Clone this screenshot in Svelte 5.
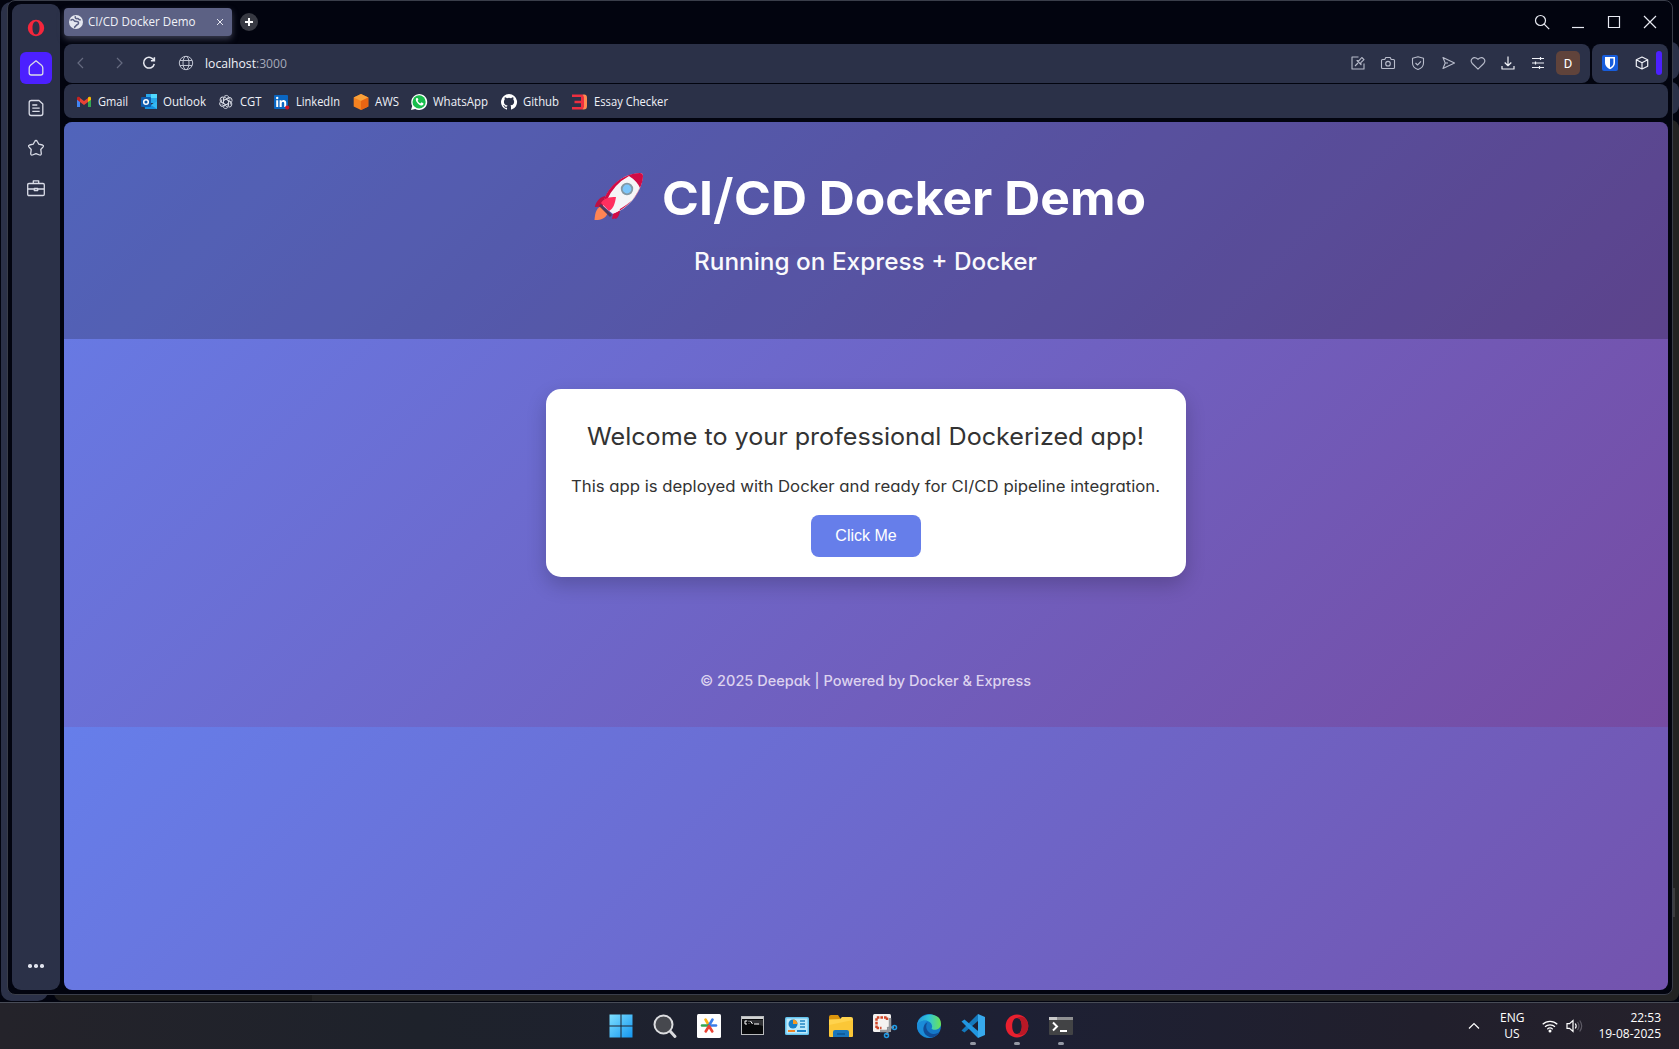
<script>
  const bookmarks = [
    { id: 'gmail', label: 'Gmail', width: 30 },
    { id: 'outlook', label: 'Outlook', width: 43 },
    { id: 'cgt', label: 'CGT', width: 21.5 },
    { id: 'linkedin', label: 'LinkedIn', width: 44 },
    { id: 'aws', label: 'AWS', width: 24 },
    { id: 'whatsapp', label: 'WhatsApp', width: 55 },
    { id: 'github', label: 'Github', width: 36 },
    { id: 'essay', label: 'Essay Checker', width: 74 },
  ];
  const tools = ['edit', 'camera', 'shield', 'send', 'heart', 'download', 'tune'];
  const apps = ['windows', 'search', 'spark', 'cmd', 'panel', 'folder', 'snip', 'edge', 'code', 'opera', 'terminal'];
  const running = ['code', 'opera', 'terminal'];
</script>

{#snippet label(text, width, size)}
  <svg class="label" {width} height="18" viewBox="0 0 {width} 18">
    <text x="0" y="13.4" font-size={size} textLength={width} lengthAdjust="spacingAndGlyphs">{text}</text>
  </svg>
{/snippet}

{#snippet bookmarkIcon(id)}
  <svg class="bm-icon" width="16" height="16" viewBox="0 0 16 16">
    {#if id === 'gmail'}
      <path d="M1 4v9h3V7z" fill="#4285f4" /><path d="M12 7v6h3V4z" fill="#34a853" />
      <path d="M4 4l4 3 4-3v4l-4 3-4-3z" fill="#ea4335" />
      <path d="M1 4.200C1 2.500 3 2.300 4 3.400V8L1 5.800z" fill="#c5221f" />
      <path d="M15 4.200c0-1.700-2-1.900-3-.8V8l3-2.200z" fill="#fbbc04" />
    {:else if id === 'outlook'}
      <path d="M5 0h11v9H5z" fill="#28a8ea" /><path d="M10 0h6v4h-6z" fill="#50d9ff" />
      <path d="M5 4h5v4H5z" fill="#0a63b5" /><path d="M3 7l7 4 6-4v8H4z" fill="#1490df" />
      <path d="M16 7v8l-6-4z" fill="#35b8f1" />
      <rect y="3" width="10" height="10" rx="1" fill="#0f5cad" />
      <circle cx="5" cy="8" r="2.300" fill="none" stroke="#fff" stroke-width="1.500" />
    {:else if id === 'cgt'}
      <g fill="none" stroke="#d5d8e2" stroke-width="1" transform="translate(.6 .6) scale(.92)">
        {#each [0, 60, 120, 180, 240, 300] as a}
          <path transform="rotate({a} 8 8)" d="M5.300 9.600V4.200C5.300.500 10-.200 11.200 2.800M5.300 6.400L10 3.700l2.700 1.600" />
        {/each}
      </g>
    {:else if id === 'linkedin'}
      <rect x="0" y="1" width="14" height="14" rx="1" fill="#0a66c2" />
      <path d="M2.200 6.200h2V13h-2zM5.600 6.200h2v1c1-1.700 4.600-1.600 4.600 1.600V13h-2V9.400c0-2-2.500-1.900-2.500 0V13h-2.100z" fill="#fff" />
      <circle cx="3.200" cy="4" r="1.200" fill="#fff" /><circle cx="13.200" cy="13.500" r="2.100" fill="#d11124" />
    {:else if id === 'aws'}
      <path d="M8 0l7.300 3.500v9L8 16 .7 12.500v-9z" fill="#f58220" />
      <path d="M8 0l7.300 3.500L8 7 .7 3.500z" fill="#f9a13a" /><path d="M8 7l7.300-3.500v9L8 16z" fill="#e96513" />
    {:else if id === 'whatsapp'}
      <path d="M0 16l1.200-4.100A8 8 0 1 1 4.200 15z" fill="#fff" />
      <circle cx="8.100" cy="7.900" r="6.600" fill="#19bd4c" />
      <path d="M5.500 4c-2.500 2 2.600 8.600 6 7.200 1-.5 1.300-1.600.8-2L10.500 8.300l-1.200 1.100C8 8.900 7 7.800 6.600 6.700l.8-1L6.600 4z" fill="#fff" />
    {:else if id === 'github'}
      <path fill="#fff" d="M8 0a8 8 0 0 0-2.530 15.590c.4.070.55-.17.55-.38v-1.490c-2.220.49-2.690-.94-2.690-.94-.36-.92-.89-1.170-.89-1.170-.73-.5.050-.49.050-.49.800.060 1.230.830 1.230.830.720 1.220 1.880.870 2.340.660.070-.520.280-.870.500-1.070-1.770-.200-3.640-.890-3.640-3.950 0-.870.310-1.590.820-2.150-.080-.200-.360-1.020.080-2.120 0 0 .670-.210 2.200.820a7.600 7.600 0 0 1 4 0c1.530-1.040 2.200-.820 2.200-.820.440 1.100.160 1.920.080 2.120.510.560.820 1.270.820 2.150 0 3.070-1.870 3.750-3.650 3.950.290.250.540.730.540 1.480v2.200c0 .210.150.460.550.380A8 8 0 0 0 8 0z" />
    {:else}
      <path d="M0 .5h10.500L13 3v10l-2.500 2.500H0v-2.600h9V9.300H2.500V6.700H9V3.100H0z" fill="#ee2f40" />
      <path d="M10.500.5h1C14.500.5 15 2 15 4v8c0 2.500-1 3.500-3.500 3.500h-1L12 13V3z" fill="#ff8a50" />
    {/if}
  </svg>
{/snippet}

{#snippet toolIcon(id)}
  <svg class="tool {id}" width="16" height="16" viewBox="0 0 16 16">
    {#if id === 'edit'}
      <path d="M8.500 2H2v12h12V8.500M5 11l3-3M7 5.500l1.800.3 3-3.300 2.200 2.200-3.200 3 .2 2z" />
    {:else if id === 'camera'}
      <path d="M2.500 4.500h2.300l1-2h4.400l1 2h2.300q1 0 1 1v7q0 1-1 1h-11q-1 0-1-1v-7q0-1 1-1z" /><circle cx="8" cy="8.700" r="2.300" />
    {:else if id === 'shield'}
      <path d="M8 1.800l5.500 1.500V8c0 3.500-2.500 5.500-5.500 6.500C5 13.500 2.500 11.500 2.500 8V3.300zM5.500 8l2 2 3.500-3.700" />
    {:else if id === 'send'}
      <path d="M3 2.500L14.500 8 3 13.500 5.200 8zM5.200 8H8" />
    {:else if id === 'heart'}
      <path d="M8 14.200L2.300 8.500C-.5 5.500 3 .2 8 4.200c5-4 8.500 1.300 5.700 4.300z" />
    {:else if id === 'download'}
      <path d="M8 1.500v9M4.700 7.500L8 10.700l3.300-3.200M2 11v3h12v-3" />
    {:else}
      <path d="M2 3.500h12M2 8h12M2 12.500h12M10.500 2v3M5.500 6.500v3M9.500 11v3" />
    {/if}
  </svg>
{/snippet}

{#snippet appIcon(id)}
  <svg width="24" height="24" viewBox="0 0 24 24">
    {#if id === 'windows'}
      <defs><linearGradient id="win" x1="0" y1="0" x2="1" y2="1"><stop stop-color="#7fe0ff" /><stop offset="1" stop-color="#1496f0" /></linearGradient></defs>
      <path d="M.5.500h11v11H.500zM12.500.500h11v11h-11zM.500 12.500h11v11H.500zM12.500 12.500h11v11h-11z" fill="url(#win)" />
    {:else if id === 'search'}
      <path d="M17 17l5 5.500" stroke="#d9dade" stroke-width="3" stroke-linecap="round" />
      <circle cx="10.500" cy="10.500" r="9" fill="#46484e" stroke="#dcdde0" stroke-width="2" />
    {:else if id === 'spark'}
      <rect width="24" height="24" rx="1.500" fill="#fff" />
      <g stroke-width="2.600" stroke-linecap="round"><path d="M12 11.500L8.500 5.500" stroke="#fbb315" /><path d="M12 11.500l3.500-6" stroke="#3b7de9" /><path d="M11 11.500H5" stroke="#34a853" /><path d="M13 11.500h6" stroke="#3b7de9" /><path d="M12 12l-3.300 5.500M12 12l3.300 5.500" stroke="#ea4335" /></g>
    {:else if id === 'cmd'}
      <rect x=".5" y="2.500" width="22" height="18" fill="#08090b" stroke="#b9bbbd" />
      <path d="M1 3h21v2H1z" fill="#d0d2d3" /><path d="M1 6h21v6z" fill="#4a4b4e" opacity=".6" />
      <path d="M6 7H4v3h2M8 7.500v.5M8 9.500v.5M9.500 7l2 3M13 10h5" stroke="#fff" fill="none" />
    {:else if id === 'panel'}
      <rect y="3" width="24" height="18" rx="1.500" fill="#63c3ee" /><rect x="1.500" y="4.500" width="21" height="15" fill="#bceafc" />
      <circle cx="8" cy="10" r="4.500" fill="#1780c8" /><path d="M8 10V5.500A4.500 4.500 0 0 1 12.500 10z" fill="#f59a22" />
      <path d="M15 7h5M15 10h5M15 13h5" stroke="#2588c4" stroke-width="1.500" /><path d="M3 17h7" stroke="#ed8527" stroke-width="2" /><path d="M12 17h9" stroke="#1780c8" stroke-width="2" />
    {:else if id === 'folder'}
      <path d="M0 3q0-2 2-2h7l2 3v5H0z" fill="#dc950c" /><path d="M0 5.500l11-.5 2-2h9q2 0 2 2v17H0z" fill="#ffd34d" />
      <path d="M0 22V11l24-5v16q0 1-1 1H1q-1 0-1-1z" fill="#fbc737" /><path d="M4 23v-5q0-2 2-2h12q2 0 2 2v5z" fill="#1976bc" /><path d="M8 20h8" stroke="#0d5795" stroke-width="1.500" />
    {:else if id === 'snip'}
      <rect width="18" height="18" rx="1.500" fill="#f4f2f1" /><path d="M3.500 14V3.500H14M3.500 14h5M14 3.500v3" fill="none" stroke="#cf4427" stroke-width="2.500" stroke-dasharray="2.600 1" />
      <path d="M17 4v11q0 2-2 2H7" fill="none" stroke="#96989c" stroke-width="2.500" /><path d="M14 14l7-1M15 15l-1 6" stroke="#8d9298" stroke-width="2" />
      <circle cx="21.500" cy="13.500" r="2" fill="none" stroke="#209be5" stroke-width="1.500" /><circle cx="13.500" cy="21.500" r="2" fill="none" stroke="#209be5" stroke-width="1.500" />
    {:else if id === 'edge'}
      <defs><linearGradient id="edg"><stop stop-color="#2396de" /><stop offset=".5" stop-color="#31c6d5" /><stop offset="1" stop-color="#6de353" /></linearGradient></defs>
      <circle cx="12" cy="12" r="12" fill="#1478c8" /><path d="M0 12C0-2 24-4 24 10c0 6-8 7-9.500 4.500C16 13 15 8 10.500 7 5 6 1 9 0 12z" fill="url(#edg)" />
      <path d="M10.500 7C4 10 6.500 23 16 23 9 26 0 20 0 12c1-4 6-6.500 10.500-5z" fill="#1b8cd8" />
      <path d="M10.500 8.500c-3 4-.5 10.500 5.500 11.500 3 .3 5-1 6.500-2-2 4-6.500 6-10 5C4 20 5.500 10 10.500 8.500z" fill="#114c96" />
    {:else if id === 'code'}
      <path d="M17 0v7L3.500 18.500.500 16.500z" fill="#1479bd" /><path d="M17 24v-7L3.500 5.500.500 7.500z" fill="#2196e0" />
      <path d="M17 0l7 3v18l-7 3z" fill="#37a9ed" />
    {:else if id === 'opera'}
      <path fill-rule="evenodd" d="M12 .5C5.600.5.700 5.600.700 12S5.600 23.500 12 23.500 23.300 18.400 23.300 12 18.400.5 12 .5zM12 4c3 0 4.800 3.500 4.800 8S15 20 12 20s-4.800-3.500-4.800-8S9 4 12 4z" fill="#e8202f" />
      <path d="M12 4c3 0 4.800 3.500 4.800 8S15 20 12 20c2.500 1.600 5.300 1.400 7.600 0 4.900-4.300 4.900-11.700 0-16-2.300-1.400-5.100-1.600-7.600 0z" fill="#b81826" />
    {:else}
      <rect y="3" width="24" height="18" rx="1" fill="#424345" /><path d="M0 3h8v3H0z" fill="#c9c9ca" /><path d="M8 3h16v3H8z" fill="#8f9092" />
      <path d="M4 8.500l4 4-4 4" fill="none" stroke="#fff" stroke-width="2" /><path d="M11 17h7" stroke="#fff" stroke-width="2" />
    {/if}
  </svg>
{/snippet}

<div class="screen">
  <div class="back-window">
    <div class="back-side"></div>
    <div class="back-bar"></div>
    <div class="back-bar second"></div>
    <div class="back-editor"></div>
    <div class="back-scroll"></div>
  </div>
  <div class="window">
    <aside class="sidebar">
      <svg class="brand" width="18" height="18" viewBox="0 0 18 18"><path fill-rule="evenodd" d="M9 .8A8.200 8.200 0 1 0 9 17.200 8.200 8.200 0 1 0 9 .8zM9 2.600c2.200 0 3.500 2.600 3.500 6.400S11.200 15.400 9 15.400 5.500 12.800 5.500 9 6.800 2.600 9 2.600z" fill="#f5263c" /></svg>
      <button class="side-item active" aria-label="Home"><svg width="18" height="18" viewBox="0 0 18 18"><path d="M9 1.800l5.500 4.400q1.300 1 1.300 2.800v5q0 2-2 2H4.200q-2 0-2-2V9q0-1.800 1.300-2.800z" /></svg></button>
      <button class="side-item" aria-label="Notes"><svg width="18" height="18" viewBox="0 0 18 18"><path d="M4 1.500h8L15.800 5v9.500q0 2-2 2H4.200q-2 0-2-2v-11q0-2 2-2zM5.300 6h5M5.300 9.200h7.400M5.300 12.400h7.400" /></svg></button>
      <button class="side-item" aria-label="Favourites"><svg width="18" height="18" viewBox="0 0 18 18"><path d="M9 1.500q.8 0 1.300 1L11.800 5.200l3.700.8q1.500.5.600 1.800L13.800 10.500l.5 4q0 2-1.700 1.500L9 14.700 5.400 16q-1.700.5-1.700-1.500l.5-4L1.900 7.800Q1 6.500 2.500 6l3.700-.8L7.700 2.500Q8.200 1.500 9 1.500z" /></svg></button>
      <button class="side-item" aria-label="Workspace"><svg width="18" height="18" viewBox="0 0 18 18"><path d="M2 4.500h14q1.300 0 1.300 1.300v9.400q0 1.300-1.300 1.300H2q-1.300 0-1.300-1.300V5.800Q.7 4.500 2 4.500zM6.300 4.500V1.800h5.400v2.700M.7 10h6.500M10.800 10h6.500M7.300 9.500h3.400v2H7.300z" /></svg></button>
      <div class="dots"><i></i><i></i><i></i></div>
    </aside>

    <div class="main">
      <div class="tabs">
        <div class="tab">
          <svg width="14" height="14" viewBox="0 0 14 14"><circle cx="7" cy="7" r="7" fill="#e4e6ef" /><path d="M1.500 5.500C3 4 4.500 4 5 5.500c.3 1 1.500 1 3 1 2 0 2 2.500.5 3S6.500 12 5 12.500M6.500 1.200C5.500 3 7 3.800 8.500 3.600s1 1.700 3.300 1.200" fill="none" stroke="#5c6184" stroke-width="1.500" /></svg>
          {@render label('CI/CD Docker Demo', 107.5, 12.2)}
          <svg class="close" width="8" height="8" viewBox="0 0 8 8"><path d="M1 1l6 6M7 1L1 7" /></svg>
        </div>
        <div class="plus"><svg width="8" height="8" viewBox="0 0 8 8"><path d="M4 0v8M0 4h8" stroke="#fff" stroke-width="2" /></svg></div>
        <div class="controls">
          <svg width="16" height="16" viewBox="0 0 16 16"><circle cx="6.500" cy="6.500" r="5" /><path d="M10.200 10.200l5 5" /></svg>
          <svg width="16" height="16" viewBox="0 0 16 16"><path d="M2 13.500h12" /></svg>
          <svg width="16" height="16" viewBox="0 0 16 16"><path d="M2.500 2.500h11v11h-11z" /></svg>
          <svg width="16" height="16" viewBox="0 0 16 16"><path d="M2 2l12 12M14 2L2 14" /></svg>
        </div>
      </div>

      <div class="bars">
        <div class="address">
          <svg class="nav dim" width="16" height="16" viewBox="0 0 16 16"><path d="M10 3L5 8l5 5" /></svg>
          <svg class="nav dim" width="16" height="16" viewBox="0 0 16 16"><path d="M6 3l5 5-5 5" /></svg>
          <svg class="nav reload" width="16" height="16" viewBox="0 0 16 16"><path d="M13 5.500A5.400 5.400 0 1 0 13.300 9M13.400 2.300v3.500h-3.500" /></svg>
          <svg class="nav globe" width="16" height="16" viewBox="0 0 16 16"><circle cx="8" cy="8" r="6.700" /><ellipse cx="8" cy="8" rx="3" ry="6.700" /><path d="M2 5.500h12M2 10.500h12" /></svg>
          <svg class="label url" width="82" height="18" viewBox="0 0 82 18"><text x="0" y="13.500" font-size="12.700" textLength="82" lengthAdjust="spacingAndGlyphs">localhost<tspan>:3000</tspan></text></svg>
          <div class="tools">
            {#each tools as t}{@render toolIcon(t)}{/each}
            <span class="avatar">D</span>
          </div>
        </div>
        <div class="extensions">
          <svg width="16" height="16" viewBox="0 0 16 16"><rect width="16" height="16" rx="2" fill="#175ddc" /><path d="M3 2h10v6c0 3-2.500 5-5 6.200C5.500 13 3 11 3 8z" fill="#fff" /><path d="M8 3.600h3.400V8c0 2-1.600 3.500-3.400 4.500z" fill="#175ddc" /></svg>
          <svg class="tool cube" width="16" height="16" viewBox="0 0 16 16"><path d="M8 2l5.700 2.700v6.600L8 14l-5.700-2.700V4.700zM2.300 4.700L8 7.700l5.700-3M8 7.700V14" /></svg>
          <i></i>
        </div>
      </div>

      <div class="bookmarks">
        {#each bookmarks as b}
          <div class="bookmark">{@render bookmarkIcon(b.id)}{@render label(b.label, b.width, 12.2)}</div>
        {/each}
      </div>

      <div class="page">
        <header>
          <div class="title-row">
            <svg class="rocket" width="50" height="50" viewBox="0 0 50 50">
              <path d="M8 34c-5 1-7 6-7.500 14 4 .5 12-1 13-7z" fill="#ff8454" />
              <path d="M14 24C7 23 2 29 .8 35l11-.5zM26 35c1 7-3 12-4.500 12L17 36z" fill="#be1044" />
              <path d="M9 34C10 20 25 2 46 1c2 0 3 1 3 3C47 23 33 37 19 42z" fill="#f5f5f7" />
              <path d="M9 32C11 19 25 2 46 1c2 0 3 1 3 3q0 5-3 12Q43 9 35 4 20 12 13 28zM46 15C41 28 29 38 19 42l-1 5 5-1 3-9C36 31 43 25 46 15z" fill="#d10b45" />
              <path d="M7 32l11 11-2 2L5 34z" fill="#4e395d" />
              <path d="M7 31c3-5 8-6 15-6-1 7-3 12-7 14z" fill="#ff2f5f" />
              <circle cx="33" cy="17" r="5.300" fill="#7cc6fa" stroke="#8399a5" stroke-width="1.800" />
            </svg>
            <svg class="fit" width="484" height="60" viewBox="0 0 484 60"><text x="0" y="43.500" font-size="47" textLength="484" lengthAdjust="spacingAndGlyphs">CI<tspan class="slash" dy="3">/</tspan><tspan dy="-3">CD Docker Demo</tspan></text></svg>
          </div>
          <svg class="fit sub" width="343" height="36" viewBox="0 0 343 36"><text x="0" y="26" font-size="24" font-weight="500" textLength="343" lengthAdjust="spacingAndGlyphs">Running on Express + Docker</text></svg>
        </header>
        <main>
          <section class="card">
            <svg class="fit" width="557" height="36" viewBox="0 0 557 36"><text x="-1" y="25.400" font-size="24" textLength="557" lengthAdjust="spacingAndGlyphs">Welcome to your professional Dockerized app!</text></svg>
            <svg class="fit para" width="590" height="26" viewBox="0 0 590 26"><text x="0" y="18.400" font-size="15.800" textLength="589" lengthAdjust="spacingAndGlyphs">This app is deployed with Docker and ready for CI/CD pipeline integration.</text></svg>
            <button class="cta">Click Me</button>
          </section>
        </main>
        <footer>
          <svg class="fit" width="331" height="24" viewBox="0 0 331 24"><text x="-1" y="17.400" font-size="14.200" font-weight="500" textLength="331" lengthAdjust="spacingAndGlyphs">© 2025 Deepak | Powered by Docker &amp; Express</text></svg>
        </footer>
      </div>
    </div>
  </div>

  <div class="taskbar">
    <div class="apps">
      {#each apps as a}
        <div class="app" class:running={running.includes(a)}>{@render appIcon(a)}</div>
      {/each}
    </div>
    <div class="tray">
      <svg class="chev" width="12" height="8" viewBox="0 0 12 8"><path d="M1 6.500l5-5 5 5" /></svg>
      <div class="lang">ENG<br />US</div>
      <svg class="wifi" width="16" height="14" viewBox="0 0 16 14"><path d="M.7 5.300a10.500 10.500 0 0 1 14.600 0M3 7.800a7.200 7.200 0 0 1 10 0M5.300 10.200a4 4 0 0 1 5.400 0" /><circle cx="8" cy="12" r="1.500" /></svg>
      <svg class="vol" width="17" height="14" viewBox="0 0 17 14"><path d="M1 4.700h2.500L7 1.500v11L3.500 9.300H1zM9.300 4.500q1.700 2.500 0 5" /><path class="faint" d="M11.500 3q3 4 0 8M13.700 1.500q4 5.500 0 11" /></svg>
      <div class="clock">22:53<br />19-08-2025</div>
    </div>
  </div>
</div>

<style>
  :global(body) { background: #02040f; overflow: hidden; }
  * { box-sizing: border-box; }
  svg { display: block; flex: none; overflow: visible; }
  button { border: 0; padding: 0; background: none; font: inherit; color: inherit; }

  .screen { position: relative; display: flex; flex-direction: column; width: 1679px; height: 1049px; background: #02040f; font-family: 'Open Sans', 'Noto Sans', sans-serif; color: #fff; overflow: hidden; }

  .back-window > div { position: absolute; }
  .back-side { left: 1px; top: 2px; width: 47px; height: 999px; background: #2b3148; border-radius: 10px; }
  .back-bar { right: 0; top: 42px; width: 12px; height: 37px; background: #2b3148; border-radius: 0 8px 8px 0; }
  .back-bar.second { top: 82px; height: 32px; }
  .back-editor { left: 54px; right: 0; top: 120px; height: 881px; background: linear-gradient(90deg, #1b1b1b 258px, #232323 258px); border-radius: 8px; }
  .back-scroll { left: 1672px; top: 888px; width: 3px; height: 29px; background: #3c3c3e; }

  .window { position: relative; display: flex; gap: 4px; flex: none; margin-left: 7px; width: 1666px; height: 995px; padding: 3px 4px 4px; background: #02040f; border: 1px solid #3a3e4a; border-radius: 8px; }

  .sidebar { display: flex; flex-direction: column; align-items: center; width: 48px; padding-top: 15px; background: #2b3148; border-radius: 9px; }
  .brand { margin-bottom: 15px; }
  .side-item { display: grid; place-items: center; width: 32px; height: 32px; margin-bottom: 8px; border-radius: 6px; }
  .side-item.active { background: #4c20ff; }
  .side-item svg { fill: none; stroke: #d9dce7; stroke-width: 1.3; stroke-linejoin: round; }
  .dots { display: flex; gap: 2.5px; margin-top: auto; margin-bottom: 22.5px; }
  .dots i { width: 3.500px; height: 3.500px; border-radius: 50%; background: #e1e4ee; }

  .main { flex: 1; display: flex; flex-direction: column; min-width: 0; }
  .tabs { display: flex; height: 40px; padding-top: 4px; }
  .tab { display: flex; align-items: center; width: 168px; height: 28px; padding: 0 8px 0 5px; gap: 5px; background: #5c6184; border-radius: 4px; box-shadow: 0 3px 6px #3a3d50; }
  .close { margin-left: auto; fill: none; stroke: #e5e7f0; }
  .label text { fill: #f0f2f8; }
  .plus { display: grid; place-items: center; width: 18px; height: 18px; margin: 5px 0 0 8px; border-radius: 50%; background: #373942; }
  .controls { display: flex; gap: 20px; margin: 6px 10px 0 auto; fill: none; stroke: #e8eaf2; stroke-width: 1.200; }

  .bars { display: flex; gap: 2px; height: 39px; }
  .address { flex: 1; display: flex; align-items: center; background: #2b3148; border-radius: 8px; padding: 0 0 1px 9px; }
  .nav { fill: none; stroke: #e7e9f1; stroke-width: 1.200; }
  .nav.dim { stroke: #666b80; margin-right: 21.500px; }
  .reload { stroke-width: 1.500; margin-left: -7px; margin-right: 21px; }
  .globe { stroke: #bfc3d1; stroke-width: 1; margin-right: 11px; }
  .url tspan { fill: #a5a9b8; }
  .tools { display: flex; align-items: center; gap: 14px; margin-left: auto; padding-right: 10px; }
  .tool { fill: none; stroke: #b9bdcc; stroke-width: 1.100; stroke-linejoin: round; }
  .download, .tune, .cube { stroke: #f0f2f8; stroke-width: 1.200; }
  .avatar { display: grid; place-items: center; width: 24px; height: 24px; margin-left: -4px; border-radius: 5px; background: #60433b; font: 400 13px Roboto, sans-serif; }
  .extensions { display: flex; align-items: center; width: 76px; padding: 0 0 1px 10px; background: #2b3148; border-radius: 8px; }
  .extensions .cube { margin-left: 16px; }
  .extensions i { width: 6px; height: 24px; margin-left: 6px; background: #4c20ff; border-radius: 3px; }

  .bookmarks { display: flex; align-items: center; gap: 12.600px; height: 34px; margin-top: 1px; padding: 1.500px 0 0 12px; background: #2b3148; border-radius: 8px; }
  .bookmark { display: flex; align-items: center; gap: 6px; }

  .page { flex: 1; margin-top: 4px; border-radius: 8px; overflow: hidden; background: linear-gradient(135deg, #667eea, #764ba2) 0 0 / 100% 605px; font-family: Inter, sans-serif; }
  .fit text { font-feature-settings: 'cv11'; fill: currentColor; }
  header { display: flex; flex-direction: column; align-items: center; height: 217px; padding-top: 49px; background: rgba(0, 0, 0, 0.2); }
  .title-row { display: flex; gap: 18px; margin-left: 8px; font-weight: 660; }
  .slash { font-size: 54px; font-weight: 500; }
  .rocket { margin-top: 1px; }
  .sub { margin: 13px 1px 0 0; opacity: .97; }
  main { display: flex; justify-content: center; padding-top: 50px; }
  .card { display: flex; flex-direction: column; align-items: center; width: 640px; height: 188px; padding-top: 31px; border-radius: 15px; background: #fff; color: #333; box-shadow: 0 8px 20px rgba(0, 0, 0, 0.2); }
  .para { margin-top: 18px; }
  .cta { margin-top: 15px; width: 110px; height: 42px; border-radius: 8px; background: #667eea; color: #fff; font: 16px 'Liberation Sans', sans-serif; }
  footer { display: flex; justify-content: center; margin-top: 92px; color: #ddd3ef; }

  .taskbar { position: relative; display: flex; align-items: center; justify-content: center; flex: none; margin-top: 7px; height: 47px; border-top: 1px solid #484c57; background: linear-gradient(90deg, #24232a, #1e222b 25%, #1d2034 60%, #211f2c 85%, #25212b); }
  .apps { display: flex; gap: 20px; margin-left: 2.500px; }
  .app { position: relative; width: 24px; height: 24px; }
  .running::after { content: ''; position: absolute; left: 9px; top: 28px; width: 6px; height: 3px; border-radius: 2px; background: #9498a4; }
  .tray { position: absolute; right: 18px; top: 0; height: 46px; display: flex; align-items: center; font: 12px/16px 'Open Sans', sans-serif; }
  .tray svg { fill: none; stroke: #fff; stroke-width: 1.200; }
  .chev { margin-right: 20px; }
  .lang { width: 24px; text-align: center; margin-right: 18px; white-space: nowrap; }
  .wifi { margin-right: 8px; }
  .wifi circle { fill: #fff; stroke: none; }
  .vol { margin-right: 8px; }
  .vol .faint { stroke: #5d5b65; }
  .clock { width: 70px; text-align: right; white-space: nowrap; }
</style>
